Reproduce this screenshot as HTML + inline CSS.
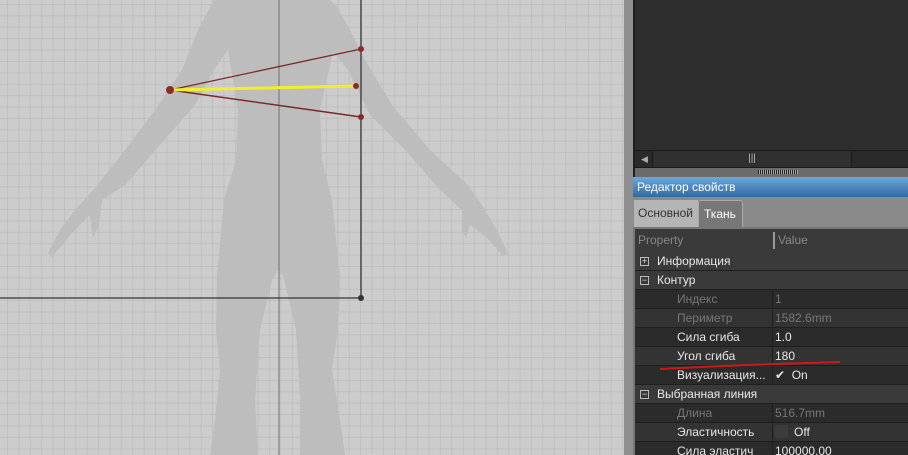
<!DOCTYPE html>
<html style="overflow:hidden"><head><meta charset="utf-8"><style>
*{margin:0;padding:0;box-sizing:border-box}
html,body{width:908px;height:455px;overflow:hidden}
body{position:relative;background:#2d2d2d;font-family:"Liberation Sans","DejaVu Sans",sans-serif;font-size:12px}
#canvas{position:absolute;left:0;top:0;width:624px;height:455px;background-color:#cccccc;
background-image:linear-gradient(to right,rgba(160,160,160,.28) 1px,transparent 1px),linear-gradient(to bottom,rgba(160,160,160,.28) 1px,transparent 1px);
background-size:11.4px 11.4px;background-position:7px 4px}
#strip{position:absolute;left:624px;top:0;width:9px;height:455px;background:#8f8f8f}
#sep{position:absolute;left:633px;top:0;width:2px;height:455px;background:#1e1e1e}
.abs{position:absolute}
.row{position:absolute;left:635px;width:273px;height:19px;color:#e8e8e8;line-height:19px;border-bottom:1px solid #1f1f1f}
.row .k{position:absolute;left:42px}
.row .v{position:absolute;left:140px}
.row .d{position:absolute;left:137px;top:0;width:1px;height:19px;background:#1f1f1f}
.dim{color:#777!important}
.grp{background:#3a3a3a}
.grp .k{left:22px}
.sub{background:#2b2b2b}
.box{position:absolute;left:5px;top:5px;width:9px;height:9px;border:1px solid #bbb;color:#ddd;font-size:9px;line-height:7px;text-align:center}
</style></head><body>
<div id="canvas">
<svg width="624" height="455" style="position:absolute;left:0;top:0">
<path fill="#bdbdbd" d="M214 0 L330 0 L338 8 L350 30 L365 60 L392 105 L430 150 L468 185 L482 205 L498 232 L508 254 L503 256 L487 238 L470 225 L466 238 L462 232 L462 210 L440 190 L405 150 L370 115 L348 70 L333 52 L320 110 L322 160 L332 200 L340 277 L338 330 L332 370 L340 420 L345 455 L300 455 L300 400 L296 330 L283 275 L278 270 L272 280 L260 330 L255 400 L258 455 L210 455 L215 420 L220 370 L216 330 L217 277 L224 200 L236 160 L238 110 L228 50 L215 68 L195 105 L160 145 L125 185 L102 200 L99 225 L93 238 L90 215 L70 235 L52 257 L48 253 L60 230 L75 210 L95 188 L125 150 L155 110 L182 70 L198 30 Z"/>
<line x1="279" y1="0" x2="279" y2="455" stroke="#6e6e6e" stroke-width="1"/>
<line x1="361" y1="0" x2="361" y2="298" stroke="#333" stroke-width="1.3"/>
<line x1="0" y1="298" x2="361" y2="298" stroke="#333" stroke-width="1.3"/>
<circle cx="361" cy="298" r="3" fill="#333"/>
<line x1="170" y1="90" x2="361" y2="49" stroke="#7a2a2a" stroke-width="1.3"/>
<line x1="170" y1="90" x2="361" y2="117" stroke="#7a2a2a" stroke-width="1.5"/>
<line x1="170" y1="90" x2="356" y2="86" stroke="#f2ee2a" stroke-width="3"/>
<circle cx="170" cy="90" r="4" fill="#8a2a2a"/>
<circle cx="361" cy="49" r="3" fill="#8a2a2a"/>
<circle cx="356" cy="86" r="3" fill="#8a2a2a"/>
<circle cx="361" cy="117" r="3" fill="#8a2a2a"/>
</svg>
</div>
<div id="strip"></div>
<div id="sep"></div>
<div class="abs" style="left:635px;top:150px;width:273px;height:18px;background:#2a2a2a;border-top:1px solid #1a1a1a;border-bottom:1px solid #1a1a1a"></div>
<div class="abs" style="left:641px;top:154px;color:#aaa;font-size:9px">◀</div>
<div class="abs" style="left:652px;top:151px;width:200px;height:16px;background:#303030;border-left:1px solid #1a1a1a;border-right:1px solid #1a1a1a;color:#bbb;font-size:10px;text-align:center;line-height:16px">|||</div>
<div class="abs" style="left:635px;top:168px;width:273px;height:9px;background:#6b6b6b"></div>
<div class="abs" style="left:758px;top:170px;width:40px;height:4px;background:repeating-linear-gradient(to right,#222 0 1px,#aaa 1px 2px)"></div>
<div class="abs" style="left:633px;top:177px;width:275px;height:20px;background:linear-gradient(#6ea6d8,#2f6aa3);color:#fff;line-height:20px;padding-left:4px">Редактор свойств</div>
<div class="abs" style="left:633px;top:197px;width:275px;height:30px;background:#8a8a8a"></div>
<div class="abs" style="left:634px;top:200px;width:64px;height:27px;background:#b5b5b5;color:#333;line-height:26px;padding-left:4px">Основной</div>
<div class="abs" style="left:698px;top:200px;width:45px;height:27px;background:#777;border:1px solid #aaa;border-bottom:none;border-radius:3px 3px 0 0;color:#fff;line-height:26px;padding-left:5px">Ткань</div>
<div class="abs" style="left:633px;top:227px;width:275px;height:228px;background:#2b2b2b;border-left:2px solid #777;border-top:2px solid #777"></div>
<div class="abs" style="left:635px;top:229px;width:273px;height:23px;background:#3a3a3a;color:#888;line-height:23px"><span style="position:absolute;left:3px">Property</span><span style="position:absolute;left:138px;top:3px;width:2px;height:17px;background:#999"></span><span style="position:absolute;left:143px">Value</span></div>
<div class="row grp" style="top:252px"><span class="box">+</span><span class="k">Информация</span></div>
<div class="row grp" style="top:271px"><span class="box">−</span><span class="k">Контур</span></div>
<div class="row sub dim" style="top:290px"><span class="k">Индекс</span><span class="d"></span><span class="v">1</span></div>
<div class="row sub dim" style="top:309px;background:#333"><span class="k">Периметр</span><span class="d"></span><span class="v">1582.6mm</span></div>
<div class="row sub" style="top:328px"><span class="k">Сила сгиба</span><span class="d"></span><span class="v">1.0</span></div>
<div class="row sub" style="top:347px;background:#333"><span class="k">Угол сгиба</span><span class="d"></span><span class="v">180</span></div>
<div class="row sub" style="top:366px"><span class="k">Визуализация...</span><span class="d"></span><span class="v">✔&nbsp; On</span></div>
<div class="row grp" style="top:385px"><span class="box">−</span><span class="k">Выбранная линия</span></div>
<div class="row sub dim" style="top:404px"><span class="k">Длина</span><span class="d"></span><span class="v">516.7mm</span></div>
<div class="row sub" style="top:423px;background:#333"><span class="k">Эластичность</span><span class="d"></span><span class="v"><span style="display:inline-block;width:13px;height:13px;background:#3c3c3c;vertical-align:-2px;margin-right:6px"></span>Off</span></div>
<div class="row sub" style="top:442px"><span class="k">Сила эластич</span><span class="d"></span><span class="v">100000.00</span></div>
<svg class="abs" style="left:655px;top:360px" width="190" height="12"><path d="M5 9 Q80 5 185 2" stroke="#d01818" stroke-width="2" fill="none"/></svg>
</body></html>
